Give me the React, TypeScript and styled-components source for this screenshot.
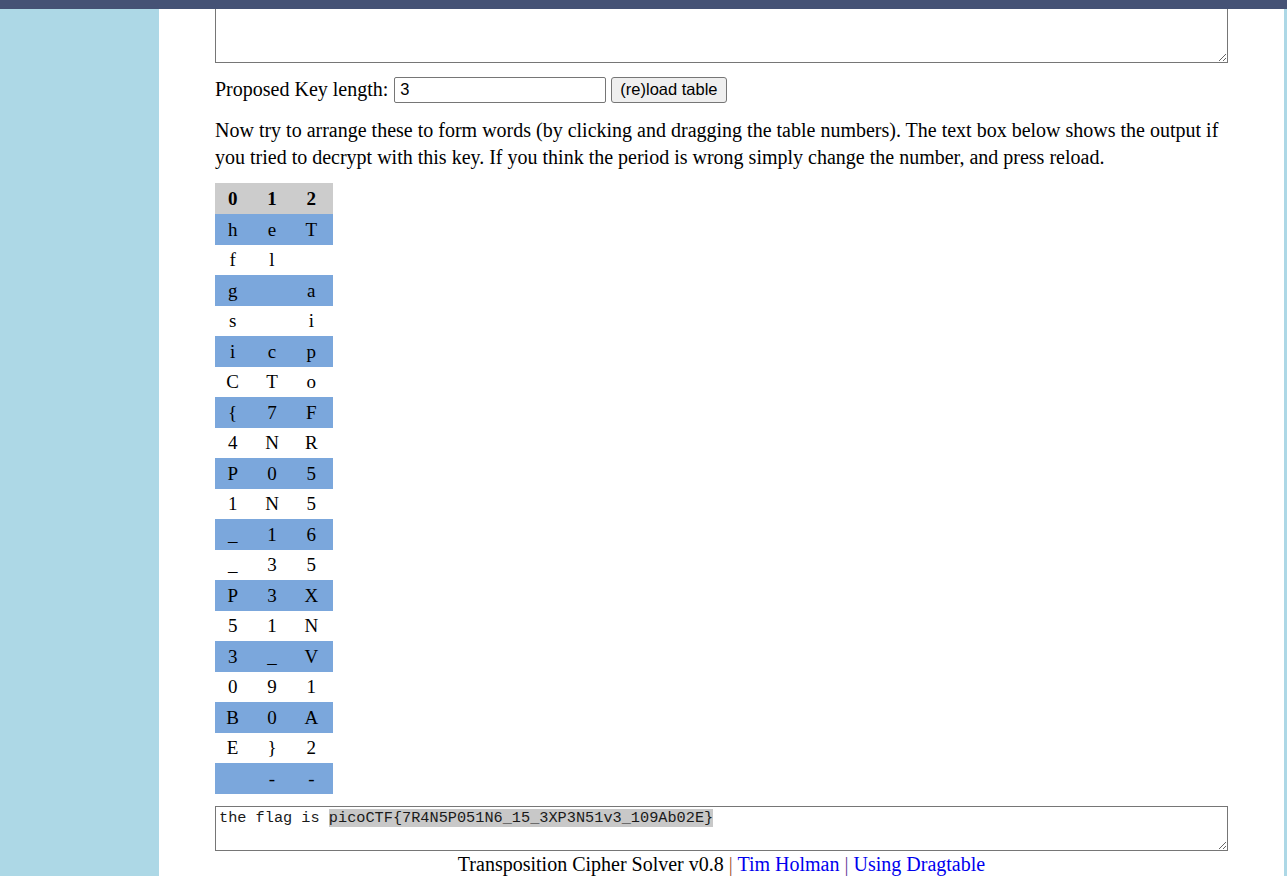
import React from "react";
import styled, { createGlobalStyle } from "styled-components";

const GlobalStyle = createGlobalStyle`
  html, body { margin: 0; padding: 0; }
  body {
    background: #add8e6;
    font-family: "Liberation Serif", "Times New Roman", serif;
    color: #000;
  }
`;

const TopBar = styled.div`
  height: 9px;
  background: #455275;
`;

const Frame = styled.div`
  display: flex;
  min-height: calc(100vh - 9px);
`;

const SideBand = styled.div<{ $w: number }>`
  width: ${(p) => p.$w}px;
  flex: none;
  background: #add8e6;
`;

const Main = styled.main`
  flex: 1;
  background: #fff;
  padding: 0 56px;
  font-size: 20px;
  line-height: 27px;
`;

const InputTextArea = styled.textarea`
  display: block;
  width: 100%;
  height: 54px;
  box-sizing: border-box;
  border: 1px solid #767676;
  border-top: none;
  margin: 0;
  padding: 2px;
  font-family: "Liberation Mono", monospace;
  font-size: 15px;
  resize: vertical;
  outline: none;
`;

const KeyRow = styled.div`
  display: flex;
  align-items: center;
  margin-top: 13px;
  height: 27px;
`;

const KeyInput = styled.input`
  width: 212px;
  height: 26px;
  box-sizing: border-box;
  margin: 0 0 0 6px;
  padding: 1px 5px;
  border: 1px solid #767676;
  border-radius: 2px;
  font-family: "Liberation Sans", Arial, sans-serif;
  font-size: 16.5px;
  color: #000;
  outline: none;
`;

const ReloadButton = styled.button`
  height: 26px;
  box-sizing: border-box;
  margin: 0 0 0 5px;
  padding: 0 8px;
  border: 1px solid #767676;
  border-radius: 3px;
  background: #efefef;
  font-family: "Liberation Sans", Arial, sans-serif;
  font-size: 16.5px;
  color: #000;
`;

const Explain = styled.p`
  margin: 14px 0 12px;
`;

const Grid = styled.table`
  border-collapse: collapse;
  table-layout: fixed;
  width: 118px;
  font-size: 19px;
`;

const HeadCell = styled.th`
  background: #cccccc;
  height: 31px;
  padding: 0 4px 0 0;
  text-align: center;
  font-weight: bold;
`;

const Row = styled.tr<{ $alt: boolean }>`
  height: 30.5px;
  background: ${(p) => (p.$alt ? "#7ba7dc" : "#fff")};
`;

const Cell = styled.td`
  padding: 0 4px 0 0;
  text-align: center;
  vertical-align: middle;
`;

const Output = styled.div`
  margin-top: 12px;
  height: 45px;
  box-sizing: border-box;
  border: 1px solid #767676;
  padding: 2px 3px;
  font-family: "Liberation Mono", "DejaVu Sans Mono", monospace;
  font-size: 15.25px;
  line-height: 18px;
  color: #1a1a1a;
  overflow: auto;
  resize: vertical;
  white-space: pre;
`;

const Selected = styled.span`
  background: #c8c8c8;
`;

const Footer = styled.div`
  text-align: center;
`;

const Sep = styled.span<{ $c: string }>`
  color: ${(p) => p.$c};
`;

const Link = styled.a`
  color: #0000ee;
  text-decoration: none;
`;

const rows: string[][] = [
  ["h", "e", "T"],
  ["f", "l", ""],
  ["g", "", "a"],
  ["s", "", "i"],
  ["i", "c", "p"],
  ["C", "T", "o"],
  ["{", "7", "F"],
  ["4", "N", "R"],
  ["P", "0", "5"],
  ["1", "N", "5"],
  ["_", "1", "6"],
  ["_", "3", "5"],
  ["P", "3", "X"],
  ["5", "1", "N"],
  ["3", "_", "V"],
  ["0", "9", "1"],
  ["B", "0", "A"],
  ["E", "}", "2"],
  ["", "-", "-"],
];

export default function App() {
  return (
    <>
      <GlobalStyle />
      <TopBar />
      <Frame>
        <SideBand $w={159} />
        <Main>
          <InputTextArea readOnly defaultValue="" />
          <KeyRow>
            <span>Proposed Key length:</span>
            <KeyInput defaultValue="3" />
            <ReloadButton>(re)load table</ReloadButton>
          </KeyRow>
          <Explain>
            Now try to arrange these to form words (by clicking and dragging the table numbers). The text box below shows
            the output if you tried to decrypt with this key. If you think the period is wrong simply change the number,
            and press reload.
          </Explain>
          <Grid>
            <thead>
              <tr>
                <HeadCell>0</HeadCell>
                <HeadCell>1</HeadCell>
                <HeadCell>2</HeadCell>
              </tr>
            </thead>
            <tbody>
              {rows.map((r, i) => (
                <Row key={i} $alt={i % 2 === 0}>
                  {r.map((c, j) => (
                    <Cell key={j}>{c}</Cell>
                  ))}
                </Row>
              ))}
            </tbody>
          </Grid>
          <Output>
            the flag is <Selected>picoCTF{"{"}7R4N5P051N6_15_3XP3N51v3_109Ab02E{"}"}</Selected>
          </Output>
          <Footer>
            Transposition Cipher Solver v0.8 <Sep $c="#a0522d">|</Sep> <Link href="#">Tim Holman</Link>{" "}
            <Sep $c="#6a3d9a">|</Sep> <Link href="#">Using Dragtable</Link>
          </Footer>
        </Main>
        <SideBand $w={3} />
      </Frame>
    </>
  );
}
